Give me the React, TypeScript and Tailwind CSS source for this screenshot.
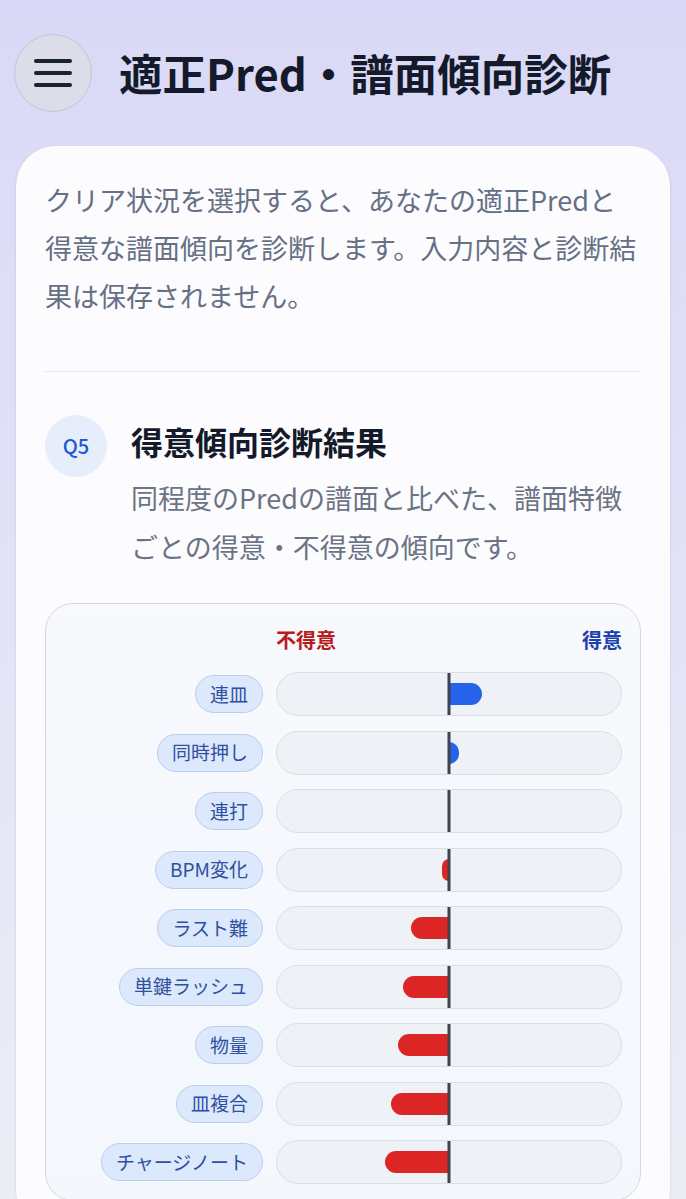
const rows = [
  { label: "連皿", value: 33 },
  { label: "同時押し", value: 10 },
  { label: "連打", value: 0 },
  { label: "BPM変化", value: -7 },
  { label: "ラスト難", value: -38 },
  { label: "単鍵ラッシュ", value: -46 },
  { label: "物量", value: -51 },
  { label: "皿複合", value: -58 },
  { label: "チャージノート", value: -64 },
];

const font = { fontFamily: '"Noto Sans CJK JP", "Noto Sans", sans-serif' };

const TrendRow = ({ label, value }: { label: string; value: number }) => (
  <div className="flex items-center gap-[13px]">
    <div className="flex flex-1 justify-end">
      <span className="flex h-[38px] items-center rounded-full border border-[#b9cff0] bg-[#dce8fb] px-[14px] text-[19px] text-[#2f509f]">
        {label}
      </span>
    </div>
    <div className="relative h-[44px] w-[346px] rounded-full border border-[#dadfe7] bg-[#eef1f6]">
      {value > 0 && (
        <div
          className="absolute left-1/2 top-1/2 h-[22px] -translate-y-1/2 rounded-r-full bg-[#2563eb]"
          style={{ width: value }}
        />
      )}
      {value < 0 && (
        <div
          className="absolute right-1/2 top-1/2 h-[22px] -translate-y-1/2 rounded-l-full bg-[#dc2626]"
          style={{ width: -value }}
        />
      )}
      <div className="absolute left-1/2 top-0 h-full w-[3px] -translate-x-1/2 bg-[#3d4450]" />
    </div>
  </div>
);

export default function App() {
  return (
    <div
      className="min-h-[1199px] bg-gradient-to-b from-[#d9d9f7] to-[#eceef5]"
      style={font}
    >
      {/* Header */}
      <header className="flex items-center gap-[27px] pl-[14px] pt-[34px]">
        <button className="flex h-[78px] w-[78px] flex-col items-center justify-center gap-[8px] rounded-full border border-[#c3c5d6] bg-[#dcdde9]">
          <span className="h-[4px] w-[38px] rounded-full bg-[#1b2230]" />
          <span className="h-[4px] w-[38px] rounded-full bg-[#1b2230]" />
          <span className="h-[4px] w-[38px] rounded-full bg-[#1b2230]" />
        </button>
        <h1 className="text-[43.5px] font-bold leading-none text-[#141a2a]">
          適正Pred・譜面傾向診断
        </h1>
      </header>

      {/* Card */}
      <main className="mx-[16px] mt-[34px] rounded-[40px] bg-[#fcfcfe] px-[29px] pb-[30px] pt-[30px] shadow-sm">
        <p className="text-[27px] leading-[48px] text-[#667085]">
          クリア状況を選択すると、あなたの適正Predと得意な譜面傾向を診断します。入力内容と診断結果は保存されません。
        </p>

        <div className="mt-[51px] border-t border-[#e3e5ea]" />

        <section className="mt-[43px] flex gap-[24px]">
          <div className="flex h-[62px] w-[62px] shrink-0 items-center justify-center rounded-full bg-[#e6edfb] text-[20px] font-medium text-[#2159d6]">
            Q5
          </div>
          <div className="flex-1">
            <h2 className="mt-[6px] text-[32px] font-bold leading-[40px] text-[#141a2a]">
              得意傾向診断結果
            </h2>
            <p className="mt-[12px] text-[27px] leading-[49px] text-[#6b7384]">
              同程度のPredの譜面と比べた、譜面特徴ごとの得意・不得意の傾向です。
            </p>
          </div>
        </section>

        {/* Chart */}
        <div className="mt-[32px] rounded-[28px] border border-[#d3d9e2] bg-gradient-to-b from-[#f7f9fd] to-[#f4f7fc] pb-[16px] pl-[19px] pr-[18px] pt-[22px]">
          <div className="flex gap-[13px]">
            <div className="flex-1" />
            <div className="flex w-[346px] justify-between text-[20px] font-bold leading-[28px]">
              <span className="text-[#b91c1c]">不得意</span>
              <span className="text-[#1e40af]">得意</span>
            </div>
          </div>
          <div className="mt-[18px] flex flex-col gap-[14.5px]">
            {rows.map((r) => (
              <TrendRow key={r.label} label={r.label} value={r.value} />
            ))}
          </div>
        </div>
      </main>
    </div>
  );
}
